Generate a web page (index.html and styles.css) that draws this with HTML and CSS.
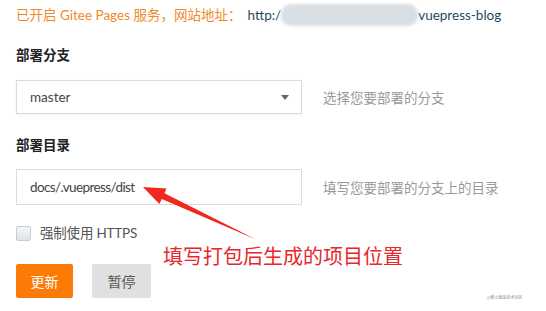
FILE: index.html
```html
<!DOCTYPE html>
<html lang="zh-CN">
<head>
    <meta charset="UTF-8">
    <title>Gitee Pages</title>
    <link rel="stylesheet" href="styles.css">
</head>
<body>
    <div class="page">
        <p class="status">已开启 Gitee Pages 服务，网站地址：<span class="url">http:/<span class="blur"></span>vuepress-blog</span></p>

        <p class="label">部署分支</p>
        <div class="row">
            <div class="select">
                <span>master</span>
                <span class="caret"></span>
            </div>
            <span class="hint">选择您要部署的分支</span>
        </div>

        <p class="label label2">部署目录</p>
        <div class="row row2">
            <div class="input">docs/.vuepress/dist</div>
            <span class="hint">填写您要部署的分支上的目录</span>
        </div>

        <div class="check">
            <span class="box"></span>
            <span>强制使用 HTTPS</span>
        </div>

        <div class="buttons">
            <button class="btn primary">更新</button>
            <button class="btn grey">暂停</button>
        </div>

        <svg class="arrow" width="546" height="311" viewBox="0 0 546 311">
            <polygon points="143,187 166.5,188.5 164.5,193.3 256,239.5 161.8,199 159.4,204" fill="#f0281e"/>
        </svg>
        <div class="note">填写打包后生成的项目位置</div>
        <div class="mark">@稀土掘金技术社区</div>
    </div>
</body>
</html>
```

FILE: styles.css
```css
* {
  box-sizing: border-box;
}

body {
  margin: 0;
  background: #fff;
  font-family: Lato, "Noto Sans CJK SC", sans-serif;
  font-size: 13.5px;
  color: #333;
}

.page {
  position: relative;
  width: 546px;
  height: 311px;
  padding: 4px 0 0 16px;
  overflow: hidden;
}

p {
  margin: 0;
}

.status {
  color: #ef8a2c;
  height: 22px;
  line-height: 22px;
  white-space: nowrap;
}

.url {
  color: #1f4a5b;
  margin-left: 6px;
}

.blur {
  display: inline-block;
  width: 137px;
  height: 22px;
  vertical-align: top;
  border-radius: 10px;
  background: #d8e0e6;
  filter: blur(1.5px);
}

.label {
  margin-top: 20px;
  font-weight: bold;
  color: #222;
  line-height: 18px;
}

.label2 {
  margin-top: 22px;
}

.row {
  display: flex;
  align-items: center;
  margin-top: 16px;
}

.row2 {
  margin-top: 15px;
}

.select,
.input {
  width: 286px;
  height: 34px;
  border: 1px solid #dcdcdc;
  display: flex;
  align-items: center;
  padding-left: 13px;
  color: #444;
}

.select {
  justify-content: space-between;
  padding-right: 12px;
  box-shadow: 0 1px 2px rgba(0, 0, 0, 0.06);
}

.input {
  height: 36px;
  letter-spacing: -0.6px;
}

.caret {
  width: 0;
  height: 0;
  border-left: 4px solid transparent;
  border-right: 4px solid transparent;
  border-top: 5px solid #666;
}

.hint {
  margin-left: 21px;
  color: #9a9a9a;
  letter-spacing: 0;
}

.check {
  display: flex;
  align-items: center;
  gap: 9px;
  margin-top: 19px;
  line-height: 18px;
  color: #555;
  letter-spacing: -0.2px;
}

.box {
  width: 15px;
  height: 15px;
  border: 1px solid #c8ccd2;
  border-radius: 2px;
  background: linear-gradient(#f4f6f9, #dde3ea);
}

.buttons {
  display: flex;
  gap: 19px;
  margin-top: 22px;
}

.btn {
  height: 34px;
  border: none;
  border-radius: 2px;
  font-family: inherit;
  font-size: 14px;
}

.primary {
  width: 57px;
  background: #fc7a06;
  color: #fff;
}

.grey {
  width: 59px;
  background: #e0e0e0;
  color: #555;
}

.arrow {
  position: absolute;
  left: 0;
  top: 0;
}

.note {
  position: absolute;
  left: 163px;
  top: 243px;
  font-size: 20px;
  line-height: 26px;
  color: #e8262c;
  font-family: "Noto Sans CJK SC", sans-serif;
}

.mark {
  position: absolute;
  left: 487px;
  top: 294px;
  font-size: 4px;
  color: #8a8a8a;
}
```
